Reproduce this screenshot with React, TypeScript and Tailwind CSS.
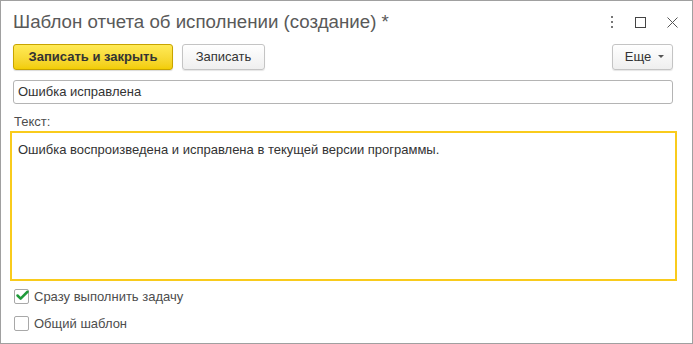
import { Check } from 'lucide-react';

export default function App() {
  return (
    <div className="w-[693px] h-[344px] bg-white border border-[#a0a0a0] flex flex-col font-['Liberation_Sans',Arial,sans-serif] text-[13px] text-[#333]">
      {/* Title bar */}
      <header className="h-[42px] flex items-center pl-[12px] pr-[14px]">
        <h1 className="flex-1 text-[18.7px] text-[#595959] leading-none">
          Шаблон отчета об исполнении (создание) *
        </h1>
        <div className="flex items-center gap-[21px]">
          <svg width="4" height="12" viewBox="0 0 4 12" className="text-[#777]">
            <rect x="1" y="0" width="2" height="2" fill="currentColor" />
            <rect x="1" y="5" width="2" height="2" fill="currentColor" />
            <rect x="1" y="10" width="2" height="2" fill="currentColor" />
          </svg>
          <svg width="11" height="11" viewBox="0 0 11 11">
            <rect x="0.5" y="0.5" width="10" height="10" fill="none" stroke="#444" strokeWidth="1" />
          </svg>
          <svg width="11" height="11" viewBox="0 0 11 11">
            <path d="M0.5 0.5 L10.5 10.5 M10.5 0.5 L0.5 10.5" stroke="#555" strokeWidth="1" />
          </svg>
        </div>
      </header>

      {/* Command bar */}
      <div className="mt-[1px] flex items-center pl-[12px] pr-[19px] h-[26px]">
        <button
          type="button"
          className="h-[26px] w-[160px] rounded-[3px] border border-[#c8a400] bg-gradient-to-b from-[#ffea55] to-[#f2cd00] font-bold text-[13px] text-[#333] shadow-[0_1px_1px_rgba(0,0,0,0.15)]"
        >
          Записать и закрыть
        </button>
        <button
          type="button"
          className="ml-[9px] h-[26px] w-[83px] rounded-[3px] border border-[#c4c4c4] bg-gradient-to-b from-white to-[#efefef] text-[13px] text-[#333] shadow-[0_1px_1px_rgba(0,0,0,0.1)]"
        >
          Записать
        </button>
        <div className="flex-1" />
        <button
          type="button"
          className="h-[26px] w-[61px] rounded-[3px] border border-[#c4c4c4] bg-gradient-to-b from-white to-[#efefef] text-[13px] text-[#333] flex items-center justify-center gap-[7px] pl-[4px] shadow-[0_1px_1px_rgba(0,0,0,0.1)]"
        >
          <span>Еще</span>
          <svg width="6" height="4" viewBox="0 0 6 4">
            <path d="M0 0 H6 L3 3 Z" fill="#555" />
          </svg>
        </button>
      </div>

      {/* Name field */}
      <div className="mt-[10px] pl-[12px] pr-[19px]">
        <div className="h-[24px] rounded-[3px] border border-[#b4b4b4] flex items-center px-[4px] text-[13px] text-[#333]">
          Ошибка исправлена
        </div>
      </div>

      {/* Text label */}
      <div className="mt-[10px] pl-[13px] text-[13px] leading-[15px] text-[#4d4d4d]">Текст:</div>

      {/* Text area */}
      <div className="mt-[2px] ml-[9px] w-[667px] h-[150px] border-2 border-[#f9cb1c] px-[6px] pt-[7px] text-[13px] text-[#333]">
        Ошибка воспроизведена и исправлена в текущей версии программы.
      </div>

      {/* Checkboxes */}
      <label className="mt-[8px] ml-[13px] flex items-center gap-[5px] h-[15px]">
        <span className="relative w-[15px] h-[15px] rounded-[2px] border border-[#a8a8a8] bg-white">
          <Check className="absolute -top-[2px] left-[0px] w-[15px] h-[15px] text-[#1f9a3a]" strokeWidth={4} />
        </span>
        <span className="text-[13px] text-[#4d4d4d]">Сразу выполнить задачу</span>
      </label>
      <label className="mt-[12px] ml-[13px] flex items-center gap-[5px] h-[15px]">
        <span className="w-[15px] h-[15px] rounded-[2px] border border-[#a8a8a8] bg-white" />
        <span className="text-[13px] text-[#4d4d4d]">Общий шаблон</span>
      </label>
    </div>
  );
}
